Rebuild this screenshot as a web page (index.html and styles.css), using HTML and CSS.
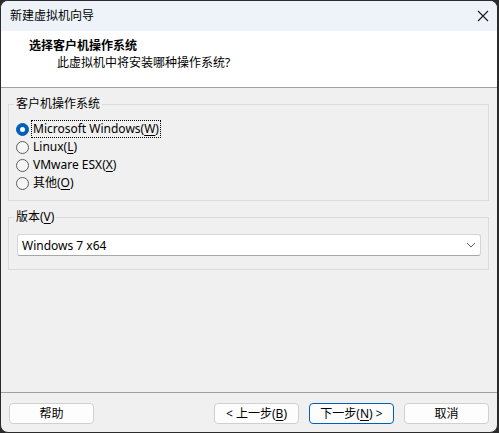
FILE: index.html
```html
<!DOCTYPE html>
<html lang="zh-CN">
<head>
  <meta charset="UTF-8">
  <title>新建虚拟机向导</title>
  <link rel="stylesheet" href="styles.css">
</head>
<body>
  <div class="window">
    <!-- タイトルバー -->
    <div class="titlebar">
      <span class="title">新建虚拟机向导</span>
      <svg class="close" width="12" height="12" viewBox="0 0 12 12">
        <path d="M1 1 L11 11 M11 1 L1 11" stroke="#1a1a1a" stroke-width="1.1" fill="none"/>
      </svg>
    </div>

    <!-- ヘッダー -->
    <div class="header">
      <h1>选择客户机操作系统</h1>
      <p>此虚拟机中将安装哪种操作系统?</p>
    </div>

    <!-- 本文 -->
    <div class="content">
      <fieldset class="group os-group">
        <legend>客户机操作系统</legend>
        <label class="radio checked"><span class="dot"></span><span class="text focus">Microsoft Windows(<u>W</u>)</span></label>
        <label class="radio"><span class="dot"></span><span class="text">Linux(<u>L</u>)</span></label>
        <label class="radio"><span class="dot"></span><span class="text">VMware ESX(<u>X</u>)</span></label>
        <label class="radio"><span class="dot"></span><span class="text">其他(<u>O</u>)</span></label>
      </fieldset>

      <fieldset class="group version-group">
        <legend>版本(<u>V</u>)</legend>
        <div class="combo">
          <span>Windows 7 x64</span>
          <svg width="10" height="6" viewBox="0 0 10 6">
            <path d="M1 1 L5 5 L9 1" stroke="#5f5f5f" stroke-width="1" fill="none"/>
          </svg>
        </div>
      </fieldset>
    </div>

    <!-- ボタン -->
    <div class="footer">
      <button class="btn">帮助</button>
      <div class="spacer"></div>
      <button class="btn">&lt; 上一步(<u>B</u>)</button>
      <button class="btn default">下一步(<u>N</u>) &gt;</button>
      <button class="btn">取消</button>
    </div>
  </div>
</body>
</html>
```

FILE: styles.css
```css
:root {
  --color-frame: #2b2b2b;
  --color-title: #eef3f9;
  --color-face:  #f0f0f0;
  --color-line:  #a0a0a0;
  --color-group: #dcdcdc;
  --color-accent: #005fb8;
  --font-base: "Segoe UI", "Noto Sans", "Noto Sans CJK SC", sans-serif;
}
*, *::before, *::after { box-sizing: border-box; }
html, body { margin: 0; padding: 0; }
body {
  background: var(--color-frame);
  font-family: var(--font-base);
  font-size: 12px;
  color: #000;
}
u { text-decoration: underline; text-underline-offset: 2px; }

.window {
  width: 498px; height: 433px;
  border: 1px solid var(--color-frame);
  border-radius: 8px;
  overflow: hidden;
  background: var(--color-face);
  display: flex; flex-direction: column;
}

/* タイトルバー */
.titlebar {
  height: 30px;
  background: var(--color-title);
  display: flex; align-items: center; justify-content: space-between;
  padding: 0 8px 0 9px;
  line-height: 16px;
}
.titlebar .close { margin-right: 0; }

/* ヘッダー */
.header {
  height: 57px;
  background: #fff;
  border-bottom: 1px solid var(--color-line);
  padding: 7px 0 0 28px;
}
.header h1 {
  margin: 0;
  font-size: 12px; font-weight: bold;
  line-height: 16px;
}
.header p {
  margin: 1px 0 0 28px;
  line-height: 16px;
}

/* 本文 */
.content {
  flex: 1;
  padding: 0 8px 0 7px;
}
.group {
  margin: 8px 0 0;
  border: 1px solid var(--color-group);
  padding: 8px 7px 8px 5px;
  min-width: 0;
}
.group legend {
  padding: 0 2px;
  line-height: 16px;
}
.radio {
  display: flex; align-items: center;
  height: 18px;
  margin-left: 2px;
}
.radio .dot {
  width: 13px; height: 13px;
  border: 1px solid #5d5d5d;
  border-radius: 50%;
  background: #f5f5f5;
  margin-right: 3px;
  display: flex; align-items: center; justify-content: center;
}
.radio.checked .dot {
  border-color: var(--color-accent);
  background: var(--color-accent);
}
.radio.checked .dot::after {
  content: '';
  width: 5px; height: 5px;
  border-radius: 50%;
  background: #fff;
}
.radio .text { line-height: 16px; padding: 0 1px; }
.radio .text.focus { outline: 1px dotted #000; outline-offset: 0; }

.version-group { padding: 9px 7px 13px 5px; }
.combo {
  margin-left: 3px;
  height: 22px;
  background: #fff;
  border: 1px solid #d5d5d5;
  border-bottom-color: #a8a8a8;
  border-radius: 3px;
  display: flex; align-items: center; justify-content: space-between;
  padding: 0 4px 0 4px;
}

/* ボタン */
.footer {
  border-top: 1px solid var(--color-line);
  padding: 10px 8px 8px 8px;
  display: flex; gap: 10px;
}
.footer .spacer { flex: 1; }
.btn {
  width: 85px; height: 21px;
  font-family: var(--font-base);
  font-size: 12px;
  color: #000;
  background: #fdfdfd;
  border: 1px solid #d0d0d0;
  border-radius: 4px;
  padding: 0;
  line-height: 16px;
}
.btn.default { border-color: var(--color-accent); }
```
